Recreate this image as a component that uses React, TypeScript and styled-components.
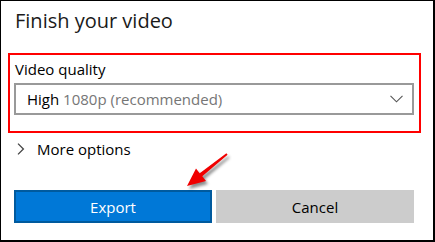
import styled, { createGlobalStyle } from "styled-components";

const GlobalStyle = createGlobalStyle`
  html, body {
    margin: 0;
    padding: 0;
    background: #ffffff;
  }
  * {
    box-sizing: border-box;
  }
`;

const Dialog = styled.div`
  position: relative;
  width: 435px;
  height: 242px;
  background: #ffffff;
  border: 1px solid #000000;
  border-right-width: 2px;
  border-bottom-width: 2px;
  padding: 0 19px 0 13px;
  display: flex;
  flex-direction: column;
  font-family: "Open Sans", "Noto Sans", sans-serif;
  color: #000000;
`;

const Title = styled.h1`
  margin: 6px 0 0 1px;
  font-size: 20px;
  line-height: 28px;
  font-weight: 400;
  color: #1a1a1a;
`;

const Highlight = styled.div`
  margin: 18px -7px 0 -6px;
  border: 2px solid #ff0000;
  padding: 4px 5px 16px 4px;
  display: flex;
  flex-direction: column;
  gap: 4px;
`;

const Label = styled.div`
  font-size: 15px;
  line-height: 20px;
  padding-left: 1px;
`;

const Select = styled.div`
  height: 32px;
  border: 2px solid #999999;
  padding: 0 9px 0 11px;
  display: flex;
  align-items: center;
  justify-content: space-between;
  font-size: 15px;
  line-height: 28px;
`;

const Muted = styled.span<{ $muted?: boolean }>`
  color: ${(p) => (p.$muted ? "#767676" : "#000000")};
`;

const MoreRow = styled.div`
  margin-top: 6px;
  display: flex;
  align-items: center;
  gap: 12px;
  padding-left: 3px;
  font-size: 15px;
  line-height: 20px;
`;

const Actions = styled.div`
  margin-top: 31px;
  display: grid;
  grid-template-columns: 1fr 1fr;
  gap: 4px;
`;

const Button = styled.button<{ $primary?: boolean }>`
  height: 33px;
  font-family: inherit;
  font-size: 15px;
  line-height: 20px;
  border: 2px solid ${(p) => (p.$primary ? "#005a9e" : "#cccccc")};
  background: ${(p) => (p.$primary ? "#0078d7" : "#cccccc")};
  color: ${(p) => (p.$primary ? "#ffffff" : "#000000")};
  padding: 0;
`;

const Arrow = styled.svg`
  position: absolute;
  left: 179px;
  top: 144px;
  filter: drop-shadow(2px 3px 1.5px rgba(0, 0, 0, 0.45));
`;

export default function App() {
  return (
    <>
      <GlobalStyle />
      <Dialog>
        <Title>Finish your video</Title>
        <Highlight>
          <Label>Video quality</Label>
          <Select>
            <span>
              High <Muted $muted>1080p (recommended)</Muted>
            </span>
            <svg width="13" height="8" viewBox="0 0 13 8">
              <path d="M0.5 0.8 L6.5 6.8 L12.5 0.8" fill="none" stroke="#555" strokeWidth="1.1" />
            </svg>
          </Select>
        </Highlight>
        <MoreRow>
          <svg width="8" height="12" viewBox="0 0 8 12">
            <path d="M1 0.6 L6.4 6 L1 11.4" fill="none" stroke="#444" strokeWidth="1.3" />
          </svg>
          <span>More options</span>
        </MoreRow>
        <Actions>
          <Button $primary>Export</Button>
          <Button>Cancel</Button>
        </Actions>
        <Arrow width="56" height="46" viewBox="179 144 56 46">
          <polygon
            points="186,185 195,167.5 198.7,172.2 225.4,152.2 226.6,153.8 201.3,175.3 205,180"
            fill="#f00000"
          />
        </Arrow>
      </Dialog>
    </>
  );
}
